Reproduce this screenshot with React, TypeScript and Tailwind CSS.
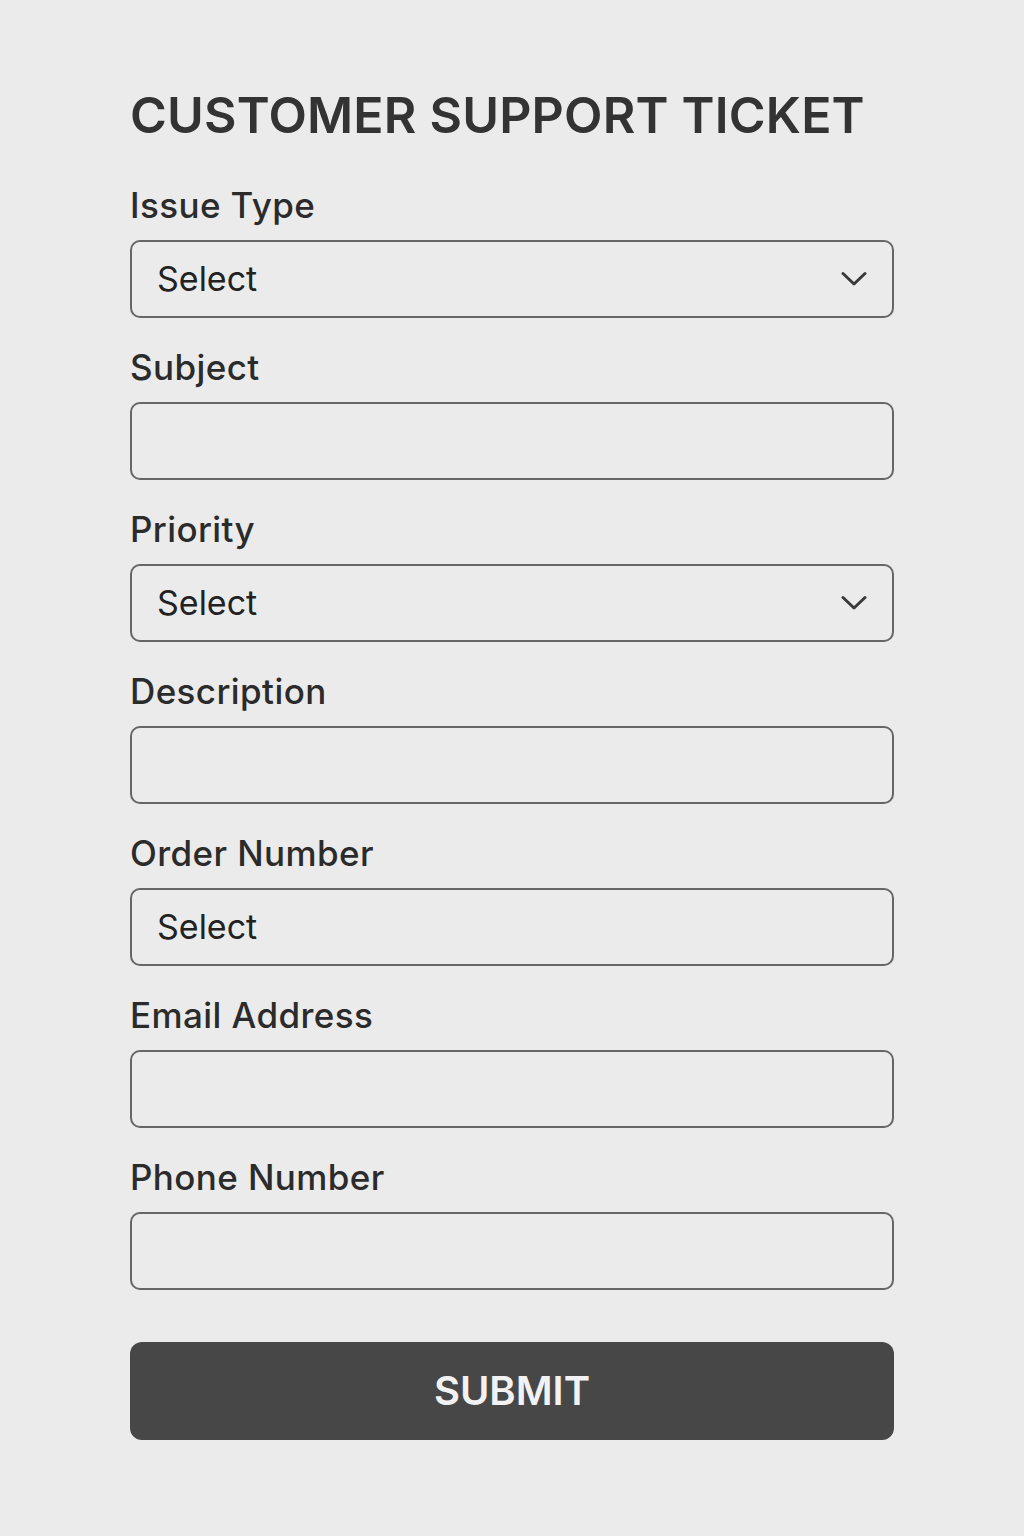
import React from 'react';

type Field = { label: string; value?: string; select?: boolean };

const fields: Field[] = [
  { label: 'Issue Type', value: 'Select', select: true },
  { label: 'Subject' },
  { label: 'Priority', value: 'Select', select: true },
  { label: 'Description' },
  { label: 'Order Number', value: 'Select' },
  { label: 'Email Address' },
  { label: 'Phone Number' },
];

const Chevron = () => (
  <svg width="26" height="16" viewBox="0 0 26 16" fill="none" className="shrink-0">
    <path d="M2 2.5 L13 13 L24 2.5" stroke="#3a3a3a" strokeWidth="3" strokeLinecap="round" strokeLinejoin="round" />
  </svg>
);

export default function App() {
  return (
    <div
      className="min-h-[1536px] w-full bg-[#ebebeb] px-[130px] pt-[90px] text-[#2b2b2b]"
      style={{ fontFamily: 'Inter, "Liberation Sans", sans-serif' }}
    >
      <h1 className="text-[50px] leading-[50px] font-semibold tracking-[0.2px] text-[#333333]">
        CUSTOMER SUPPORT TICKET
      </h1>

      <div className="mt-[45px] flex flex-col gap-[29px]">
        {fields.map((f) => (
          <div key={f.label} className="flex flex-col">
            <label className="text-[35px] leading-[40px] font-medium tracking-[0.4px] text-[#2b2b2b]">{f.label}</label>
            <div className="mt-[15px] flex h-[78px] items-center justify-between rounded-[10px] border-2 border-[#666666] bg-[#ebebeb] pl-[25px] pr-[25px]">
              <span className="text-[34px] leading-none text-[#222222]">{f.value ?? ''}</span>
              {f.select && <Chevron />}
            </div>
          </div>
        ))}
      </div>

      <button className="mt-[52px] flex h-[98px] w-full items-center justify-center rounded-[12px] bg-[#474747] text-[40px] font-semibold text-[#f2f2f2]">
        SUBMIT
      </button>
    </div>
  );
}
